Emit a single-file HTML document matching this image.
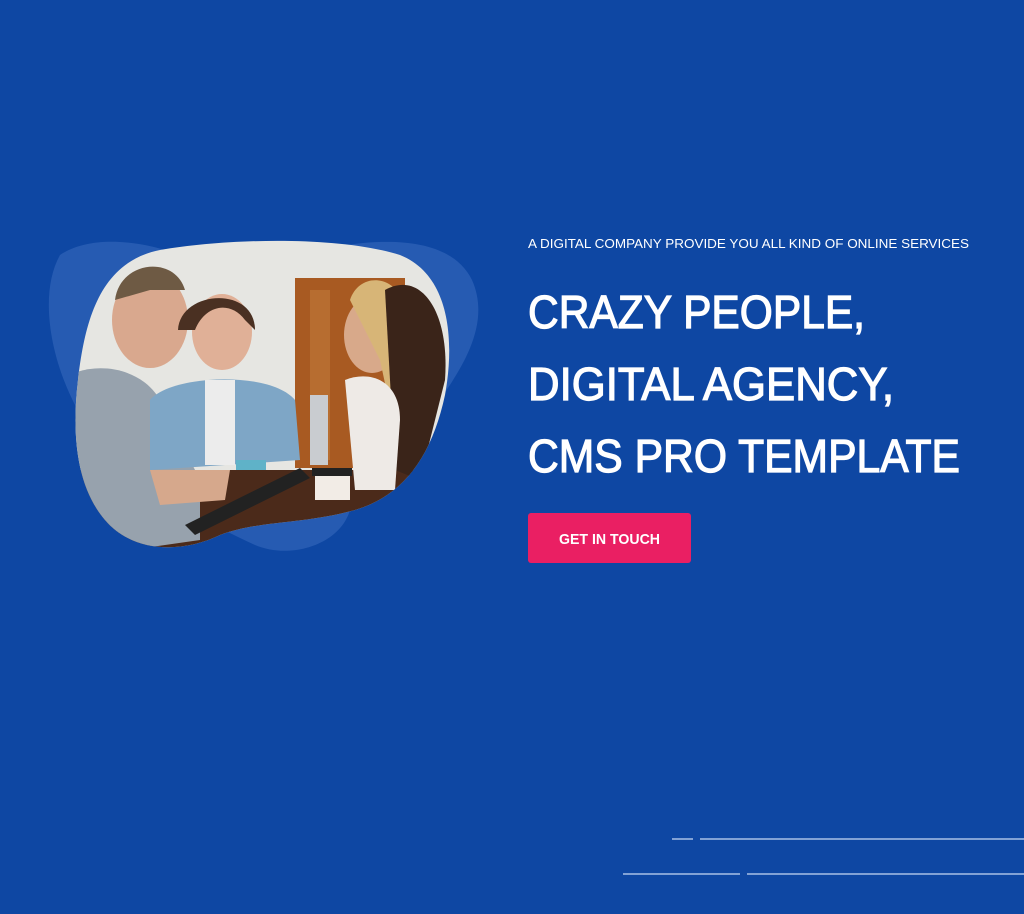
<!DOCTYPE html>
<html><head><meta charset="utf-8"><style>
html,body{margin:0;padding:0;width:1024px;height:914px;overflow:hidden;background:#0e47a3;}
svg{position:absolute;left:0;top:0}
</style></head><body>
<svg width="1024" height="914" viewBox="0 0 1024 914" xmlns="http://www.w3.org/2000/svg">
<defs>
<clipPath id="c"><path d="M160 250 C230 238 340 236 400 255 C450 275 455 340 445 395 C432 455 405 495 355 510 C300 525 260 520 220 535 C185 552 135 555 105 520 C75 485 72 430 78 380 C85 320 100 262 160 250 Z"/></clipPath>
</defs>
<path d="M60 255 C90 235 140 240 180 255 L330 248 C380 238 450 235 472 280 C492 325 460 370 440 400 C420 440 360 465 350 510 C340 545 290 560 255 545 C200 520 130 480 90 430 C55 380 35 300 60 255 Z" fill="#2a5fb5" opacity="0.85"/>
<g clip-path="url(#c)">
<rect x="60" y="230" width="420" height="340" fill="#e6e6e2"/>
<rect x="295" y="278" width="110" height="190" fill="#a85a22"/>
<rect x="310" y="290" width="20" height="170" fill="#c27a3a" opacity="0.6"/>
<rect x="60" y="470" width="420" height="100" fill="#4b2a1a"/>
<ellipse cx="150" cy="320" rx="38" ry="48" fill="#d9a88e"/>
<path d="M115 300 C120 260 175 255 185 290 L150 290 Z" fill="#6e5a44"/>
<path d="M60 380 C90 360 140 365 160 400 L200 480 L200 540 L60 560 Z" fill="#97a2ad"/>
<path d="M150 470 L230 470 L225 500 L160 505 Z" fill="#d6a88c"/>
<ellipse cx="222" cy="332" rx="30" ry="38" fill="#e0b097"/>
<path d="M178 330 C180 290 255 285 255 330 L245 320 C230 300 205 305 195 330 Z" fill="#4a3022"/>
<path d="M150 400 C170 375 270 370 295 400 L300 460 L150 470 Z" fill="#7ea6c6"/>
<rect x="205" y="380" width="30" height="85" fill="#ececec"/>
<ellipse cx="372" cy="335" rx="28" ry="38" fill="#d8a98a"/>
<path d="M350 300 C360 270 400 275 405 310 L395 430 L380 360 Z" fill="#d7b577"/>
<path d="M385 290 C420 270 450 310 445 380 L420 480 L395 470 Z" fill="#3a2419"/>
<path d="M345 380 C370 370 400 380 400 420 L395 490 L355 490 Z" fill="#eeeae6"/>
<rect x="310" y="395" width="18" height="70" fill="#c9ccd0"/>
<rect x="315" y="470" width="35" height="30" fill="#f2ece6"/>
<rect x="312" y="468" width="40" height="8" fill="#222"/>
<path d="M185 525 L300 468 L310 478 L195 535 Z" fill="#222"/>
<rect x="236" y="460" width="30" height="10" fill="#5fb2c8"/>
</g>
<g fill="#fff" font-family="'Liberation Sans',sans-serif">
<text x="528" y="248" font-size="13" textLength="441" lengthAdjust="spacingAndGlyphs">A DIGITAL COMPANY PROVIDE YOU ALL KIND OF ONLINE SERVICES</text>
<g stroke="#fff" stroke-width="1.2">
<text x="528" y="328" font-size="46" textLength="337" lengthAdjust="spacingAndGlyphs">CRAZY PEOPLE,</text>
<text x="528" y="400" font-size="46" textLength="366" lengthAdjust="spacingAndGlyphs">DIGITAL AGENCY,</text>
<text x="528" y="472" font-size="46" textLength="432" lengthAdjust="spacingAndGlyphs">CMS PRO TEMPLATE</text>
</g>
</g>
<rect x="528" y="513" width="163" height="50" rx="3" fill="#ea1f63"/>
<text x="559" y="544" font-family="'Liberation Sans',sans-serif" font-size="15" font-weight="bold" fill="#fff" textLength="101" lengthAdjust="spacingAndGlyphs">GET IN TOUCH</text>
<g stroke="#a9c0e6" stroke-width="1.5">
<line x1="672" y1="839" x2="693" y2="839"/>
<line x1="700" y1="839" x2="1024" y2="839"/>
<line x1="623" y1="874" x2="740" y2="874"/>
<line x1="747" y1="874" x2="1024" y2="874"/>
</g>
</svg>
</body></html>
